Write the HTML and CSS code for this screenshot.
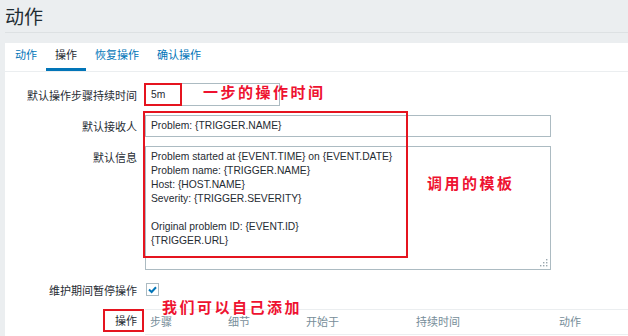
FILE: index.html
```html
<!DOCTYPE html>
<html lang="zh">
<head>
    <meta charset="UTF-8">
    <title>动作</title>
    <link rel="stylesheet" href="styles.css">
</head>
<body>
    <div class="page-head">
        <h1>动作</h1>
    </div>

    <div class="panel">
        <ul class="tabs">
            <li><a href="#">动作</a></li>
            <li class="active"><a href="#">操作</a></li>
            <li><a href="#">恢复操作</a></li>
            <li><a href="#">确认操作</a></li>
        </ul>

        <div class="form-grid">
            <label class="lbl">默认操作步骤持续时间</label>
            <div><div class="input short">5m</div></div>

            <label class="lbl">默认接收人</label>
            <div><div class="input wide">Problem: {TRIGGER.NAME}</div></div>

            <label class="lbl lbl-top">默认信息</label>
            <div>
                <div class="textarea">Problem started at {EVENT.TIME} on {EVENT.DATE}
Problem name: {TRIGGER.NAME}
Host: {HOST.NAME}
Severity: {TRIGGER.SEVERITY}

Original problem ID: {EVENT.ID}
{TRIGGER.URL}<svg class="grip" width="9" height="9" viewBox="0 0 9 9"><g fill="#9aa7ae"><rect x="7" y="1" width="1.4" height="1.4"/><rect x="4" y="4" width="1.4" height="1.4"/><rect x="7" y="4" width="1.4" height="1.4"/><rect x="1" y="7" width="1.4" height="1.4"/><rect x="4" y="7" width="1.4" height="1.4"/><rect x="7" y="7" width="1.4" height="1.4"/></g></svg></div>
            </div>

            <label class="lbl">维护期间暂停操作</label>
            <div class="check-cell">
                <span class="checkbox">
                    <svg width="11" height="11" viewBox="0 0 11 11"><path d="M2 5.5 L4.6 8 L9 3.2" fill="none" stroke="#0275b8" stroke-width="2"/></svg>
                </span>
            </div>

            <label class="lbl lbl-table">操作</label>
            <div class="ops-table">
                <span>步骤</span>
                <span>细节</span>
                <span>开始于</span>
                <span>持续时间</span>
                <span>动作</span>
            </div>
        </div>
    </div>

    <!-- notes drawn over the screenshot -->
    <div class="mark mark-time"></div>
    <div class="mark mark-msg"></div>
    <div class="mark mark-ops"></div>
    <div class="note note-time">一步的操作时间</div>
    <div class="note note-msg">调用的模板</div>
    <div class="note note-ops">我们可以自己添加</div>
</body>
</html>
```

FILE: styles.css
```css
html {
    overflow: hidden;
}
body {
    margin: 0;
    position: relative;
    height: 336px;
    background: #ebeef0;
    color: #1f2c33;
    font-family: "Liberation Sans", Arial, "Noto Sans CJK SC", sans-serif;
    font-size: 10.3px;
}
.page-head {
    margin-left: 5px;
    padding-top: 4px;
    border-bottom: 1px solid #dde1e3;
}
h1 {
    margin: 0;
    font-size: 19px;
    font-weight: normal;
    line-height: 28px;
}
.panel {
    margin: 10px 0 0 5px;
    height: 293px;
    background: #fff;
}
.tabs {
    list-style: none;
    margin: 0;
    padding: 0 0 0 1px;
    display: flex;
    border-bottom: 1px solid #ebeef0;
}
.tabs li {
    padding: 0 9px;
    border-bottom: 3px solid transparent;
}
.tabs li a {
    display: block;
    line-height: 25px;
    font-size: 11px;
    color: #0275b8;
    text-decoration: none;
}
.tabs li.active {
    border-bottom-color: #0275b8;
}
.tabs li.active a {
    color: #1f2c33;
}
.form-grid {
    display: grid;
    grid-template-columns: 132px 1fr;
    column-gap: 8px;
    row-gap: 9px;
    padding-top: 11px;
    align-items: center;
}
.lbl {
    text-align: right;
    font-size: 11px;
}
.lbl-top {
    align-self: start;
    padding-top: 3px;
}
.input {
    box-sizing: border-box;
    border: 1px solid #acbbc2;
    padding: 0 5px;
    line-height: 20px;
    height: 22px;
}
.short {
    width: 135px;
    height: 23px;
    line-height: 21px;
}
.wide {
    width: 406px;
}
.textarea {
    position: relative;
    box-sizing: border-box;
    width: 406px;
    height: 124px;
    border: 1px solid #acbbc2;
    padding: 3px 5px;
    line-height: 14px;
    white-space: pre;
}
.grip {
    position: absolute;
    right: 2px;
    bottom: 2px;
}
.check-cell {
    height: 21px;
    display: flex;
    align-items: center;
}
.checkbox {
    box-sizing: border-box;
    width: 13px;
    height: 13px;
    border: 1px solid #acbbc2;
    display: flex;
    align-items: center;
    justify-content: center;
    margin-left: 1px;
}
.lbl-table {
    align-self: start;
    line-height: 25px;
}
.ops-table {
    display: grid;
    grid-template-columns: 78px 78px 110px 143px auto;
    padding-left: 5px;
    height: 24px;
    line-height: 24px;
    border-top: 1px solid #ebeef0;
    border-bottom: 1px solid #ebeef0;
    color: #768d99;
    font-size: 11px;
}

/* red notes */
.mark {
    position: absolute;
    box-sizing: border-box;
    border: 2px solid #e5141f;
}
.mark-time {
    left: 144px;
    top: 83px;
    width: 38px;
    height: 23px;
}
.mark-msg {
    left: 143px;
    top: 111px;
    width: 265px;
    height: 147px;
}
.mark-ops {
    left: 103px;
    top: 309px;
    width: 41px;
    height: 23px;
}
.note {
    position: absolute;
    color: #ee1230;
    font-family: "Noto Sans CJK SC", sans-serif;
    font-weight: 700;
    font-size: 15px;
    letter-spacing: 2.5px;
    line-height: 18px;
}
.note-time {
    left: 203px;
    top: 83px;
}
.note-msg {
    left: 427px;
    top: 174px;
}
.note-ops {
    left: 162px;
    top: 298px;
}
```
